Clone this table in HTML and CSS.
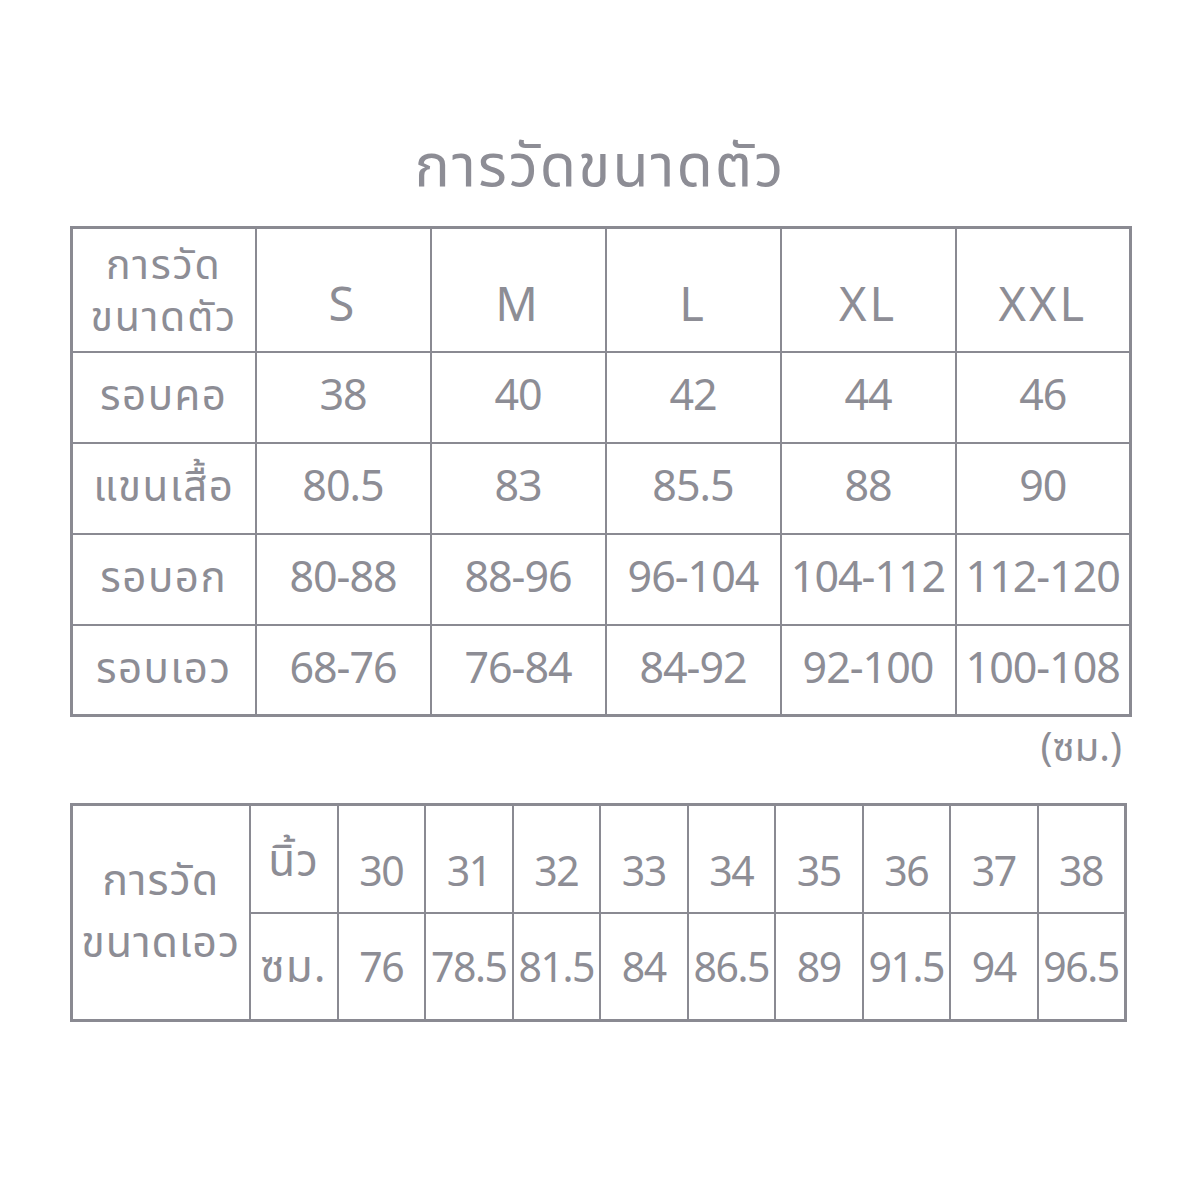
FILE: index.html
```html
<!DOCTYPE html>
<html lang="th">
<head>
<meta charset="utf-8">
<link rel="stylesheet" href="styles.css">
</head>
<body>
<div class="page">
  <h1 class="title">การวัดขนาดตัว</h1>
  <table class="chart body-chart">
    <colgroup>
      <col class="c-label"><col class="c-size"><col class="c-size"><col class="c-size"><col class="c-size"><col class="c-size">
    </colgroup>
    <tr class="head-row">
      <td class="label head-label"><span class="line">การวัด</span><span class="line">ขนาดตัว</span></td>
      <td class="size">S</td><td class="size">M</td><td class="size">L</td><td class="size">XL</td><td class="size">XXL</td>
    </tr>
    <tr><td class="label">รอบคอ</td><td>38</td><td>40</td><td>42</td><td>44</td><td>46</td></tr>
    <tr><td class="label">แขนเสื้อ</td><td>80.5</td><td>83</td><td>85.5</td><td>88</td><td>90</td></tr>
    <tr><td class="label">รอบอก</td><td>80-88</td><td>88-96</td><td>96-104</td><td>104-112</td><td>112-120</td></tr>
    <tr><td class="label">รอบเอว</td><td>68-76</td><td>76-84</td><td>84-92</td><td>92-100</td><td>100-108</td></tr>
  </table>
  <div class="unit-note">(ซม.)</div>
  <table class="chart waist-chart">
    <colgroup>
      <col class="w-label"><col class="w-unit">
      <col class="w-val"><col class="w-val"><col class="w-val"><col class="w-val"><col class="w-val"><col class="w-val"><col class="w-val"><col class="w-val"><col class="w-val">
    </colgroup>
    <tr class="inch-row">
      <td class="label waist-label" rowspan="2"><span class="line">การวัด</span><span class="line">ขนาดเอว</span></td>
      <td class="unit">นิ้ว</td>
      <td>30</td><td>31</td><td>32</td><td>33</td><td>34</td><td>35</td><td>36</td><td>37</td><td>38</td>
    </tr>
    <tr class="cm-row">
      <td class="unit">ซม.</td>
      <td>76</td><td>78.5</td><td>81.5</td><td>84</td><td>86.5</td><td>89</td><td>91.5</td><td>94</td><td>96.5</td>
    </tr>
  </table>
</div>
</body>
</html>
```
FILE: styles.css
```css
html, body {
  margin: 0;
  padding: 0;
  background: #ffffff;
}
.page {
  width: 1200px;
  height: 1200px;
  padding-top: 126px;
  box-sizing: border-box;
  font-family: "Noto Sans Thai", "Noto Sans Thai UI", "Noto Sans", "DejaVu Sans", sans-serif;
  color: #8d8d95;
}
.title {
  margin: 0;
  height: 100px;
  text-align: center;
  font-size: 59px;
  font-weight: 400;
  line-height: 84px;
  letter-spacing: 2px;
  color: #8d8d95;
}
.chart {
  margin-left: 70px;
  width: 1055px;
  border-collapse: collapse;
  table-layout: fixed;
  border: 3px solid #8a8a92;
}
.chart td {
  border: 2px solid #8a8a92;
  text-align: center;
  vertical-align: middle;
  padding: 0;
  font-size: 43px;
  line-height: 50px;
  letter-spacing: -1px;
  white-space: nowrap;
}
.line {
  display: block;
}
.body-chart .c-label { width: 184px; }
.body-chart .c-size { width: 175px; }
.body-chart tr { height: 91px; }
.body-chart .head-row { height: 124px; }
.body-chart .size { font-size: 47px; padding-top: 34px; letter-spacing: 3px; }
.chart .label { font-size: 42px; letter-spacing: 1.5px; }
.body-chart .head-label { font-size: 41px; line-height: 52px; padding-top: 4px; letter-spacing: 1.8px; }
.unit-note {
  width: 1122px;
  text-align: right;
  font-size: 40px;
  line-height: 44px;
  height: 86px;
  padding-top: 10px;
  box-sizing: border-box;
}
.waist-chart .w-label { width: 178px; }
.waist-chart .w-unit { width: 88px; }
.waist-chart .w-val { width: 87.5px; }
.waist-chart tr { height: 108px; }
.waist-chart .inch-row td { padding-top: 28px; }
.waist-chart .cm-row td { padding-top: 6px; }
.waist-chart td { font-size: 41px; letter-spacing: -1.5px; }
.waist-chart .waist-label { font-size: 43px; line-height: 62px; letter-spacing: 1px; }
.waist-chart .inch-row .waist-label { padding-top: 0; }
.waist-chart .unit { font-size: 44px; letter-spacing: 1px; }
.waist-chart .inch-row .unit { padding-top: 8px; }
```
